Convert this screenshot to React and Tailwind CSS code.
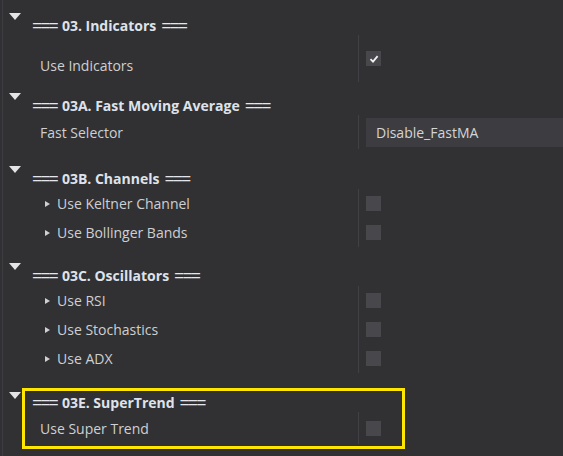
import React from "react";

const DownArrow = () => (
  <div className="w-0 h-0 border-l-[6px] border-r-[6px] border-t-[7px] border-l-transparent border-r-transparent border-t-[#e4e4e6]" />
);

const Bullet = () => (
  <div className="w-0 h-0 border-t-[3px] border-b-[3px] border-l-[5px] border-t-transparent border-b-transparent border-l-[#d0d0d2] mr-[7px]" />
);

const Checkbox = ({ checked }) => (
  <div className="w-[15px] h-[15px] bg-[#48484c] flex items-center justify-center">
    {checked && (
      <svg width="10" height="10" viewBox="0 0 10 10">
        <path d="M1.5 5.2 L4 7.6 L8.6 2.2" fill="none" stroke="#f2f2f2" strokeWidth="1.8" />
      </svg>
    )}
  </div>
);

const Eq = () => (
  <span className="text-[18px] font-normal tracking-[-2px] text-[#e4e6ec]">===</span>
);

const Header = ({ children }) => (
  <div className="h-[20px] flex items-center gap-[5px] pl-[10px] text-[14px] font-bold text-[#dfe2ea] whitespace-nowrap">
    <Eq />
    <span>{children}</span>
    <Eq />
  </div>
);

const Row = ({ label, bullet, checked, labelW = "w-[336px]" }) => (
  <div className="h-[29px] flex">
    <div className={`${labelW} flex items-center pl-[18px] text-[14px] text-[#cfcfd1]`}>
      {bullet && (
        <span className="pl-[5px] flex items-center">
          <Bullet />
        </span>
      )}
      {label}
    </div>
    <div className="w-px bg-[#414145]" />
    <div className="pl-[7px] flex items-center">
      <Checkbox checked={checked} />
    </div>
  </div>
);

const App = () => {
  return (
    <div
      className="w-[563px] h-[456px] bg-[#313134] overflow-hidden flex"
      style={{ fontFamily: '"Open Sans", "Noto Sans", sans-serif' }}
    >
      <div className="w-[2px] shrink-0" />
      <div className="w-px shrink-0 bg-[#3d3d41]" />
      <div className="flex-1 -ml-[3px]">
        {/* 03 */}
        <div className="flex pt-[13px]">
          <div className="w-[22px] pl-[9px]">
            <DownArrow />
          </div>
          <div className="flex-1 pt-[2px]">
            <Header>03. Indicators</Header>
            <div className="h-[47px] flex">
              <div className="w-[336px] pl-[18px] pt-[20px] text-[14px] text-[#cfcfd1]">Use Indicators</div>
              <div className="w-px bg-[#414145]" />
              <div className="pl-[7px] pt-[16px]">
                <Checkbox checked />
              </div>
            </div>
          </div>
        </div>

        {/* 03A */}
        <div className="flex pt-[11px]">
          <div className="w-[22px] pl-[9px]">
            <DownArrow />
          </div>
          <div className="flex-1 pt-[2px]">
            <Header>03A. Fast Moving Average</Header>
            <div className="h-[34px] flex">
              <div className="w-[336px] flex items-center pl-[18px] text-[14px] text-[#cfcfd1]">Fast Selector</div>
              <div className="w-px bg-[#414145]" />
              <div className="flex-1 pl-[7px] pt-[3px] pb-[2px]">
                <div className="h-full bg-[#3d3d41] flex items-center pl-[10px] text-[14px] text-[#d4d4d6]">Disable_FastMA</div>
              </div>
            </div>
          </div>
        </div>

        {/* 03B */}
        <div className="flex pt-[17px]">
          <div className="w-[22px] pl-[9px]">
            <DownArrow />
          </div>
          <div className="flex-1 pt-[2px]">
            <Header>03B. Channels</Header>
            <div className="pt-[1px]">
              <Row label="Use Keltner Channel" bullet />
              <Row label="Use Bollinger Bands" bullet />
            </div>
          </div>
        </div>

        {/* 03C */}
        <div className="flex pt-[16px]">
          <div className="w-[22px] pl-[9px]">
            <DownArrow />
          </div>
          <div className="flex-1 pt-[2px]">
            <Header>03C. Oscillators</Header>
            <div className="pt-[1px]">
              <Row label="Use RSI" bullet />
              <Row label="Use Stochastics" bullet />
              <Row label="Use ADX" bullet />
            </div>
          </div>
        </div>

        {/* 03E */}
        <div className="flex pt-[15px]">
          <div className="w-[22px] pl-[9px] pt-[4px]">
            <DownArrow />
          </div>
          <div className="w-[383px] border-[3px] border-[#ffe600] pt-[1px] pb-[2px]">
            <div className="-ml-[3px]">
              <Header>03E. SuperTrend</Header>
            </div>
            <div className="h-[32px] flex">
              <div className="w-[333px] flex items-center pl-[15px] text-[14px] text-[#cfcfd1]">Use Super Trend</div>
              <div className="w-px bg-[#414145]" />
              <div className="pl-[7px] flex items-center">
                <Checkbox />
              </div>
            </div>
          </div>
        </div>
      </div>
    </div>
  );
};

export default App;
